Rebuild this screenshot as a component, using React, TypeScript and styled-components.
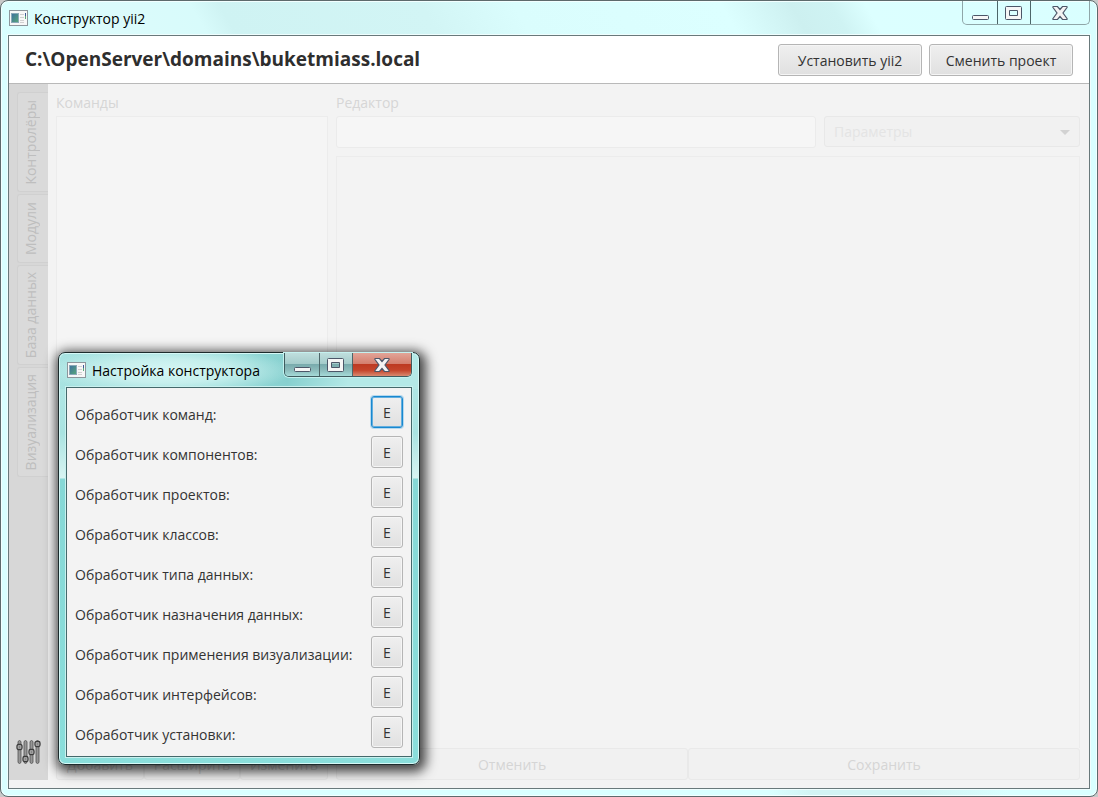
import React from "react";
import styled, { createGlobalStyle, css } from "styled-components";

const Global = createGlobalStyle`
  *, *::before, *::after { box-sizing: border-box; }
  body { margin: 0; background: #c9c9c9; font-family: "Open Sans", "Noto Sans", sans-serif; font-size: 14px; color: #333; }
  button, input, select { font: inherit; color: inherit; margin: 0; }
`;

const Window = styled.div`
  position: relative;
  display: flex;
  flex-direction: column;
  min-height: 100vh;
  padding: 0 7px 7px;
  border: 1px solid #5d6a6c;
  border-radius: 8px;
  box-shadow: inset 0 0 0 1px #f2ffff;
  background:
    linear-gradient(60deg, #d9ffff 0, #dcfbfb 90px, #d8fbfb 180px, #cff3f3 205px, #d2f5f5 380px, #dafdfd 460px, #dcffff 640px, #cdf0f0 700px, #cff3f3 735px, #dcffff 765px, #d9ffff 100%) 0 0 / 100% 36px no-repeat,
    linear-gradient(to right, #d9ffff 0, #d9ffff 70%, #d2f4f4 74%, #d2f4f4 84%, #d9ffff 92%) 0 100% / 100% 8px no-repeat,
    #d9ffff;
`;

const TitleBar = styled.header`
  display: flex;
  align-items: flex-start;
  height: 34px;
  flex: none;
`;

const Caption = styled.h1`
  display: flex;
  flex: 1;
  align-items: center;
  gap: 6px;
  height: 34px;
  margin: 0;
  padding-left: 1px;
  font-size: 14px;
  font-weight: 400;
  color: #000;
  white-space: nowrap;
`;

const Controls = styled.div<{ $active?: boolean }>`
  display: flex;
  height: 24px;
  border: 1px solid ${(p) => (p.$active ? "#3f5b5e" : "#8fa6a8")};
  border-top: 0;
  border-radius: 0 0 5px 5px;
  overflow: hidden;
  ${(p) => p.$active && css`box-shadow: 0 0 0 1px #c4f1ef;`}
`;

const ControlButton = styled.button<{ $width: number; $tone?: "glass" | "red" }>`
  display: grid;
  place-items: center;
  width: ${(p) => p.$width}px;
  padding: 0;
  border: 0;
  background: ${(p) =>
    p.$tone === "red"
      ? "linear-gradient(#e2a598 0, #d4806f 46%, #bd3a22 50%, #c5452b 75%, #d98a70 100%)"
      : p.$tone === "glass"
      ? "linear-gradient(#bfdedd 0, #a5cccb 46%, #79abad 50%, #8cbcbc 75%, #a5dad8 100%)"
      : "transparent"};
  & + & { border-left: 1px solid ${(p) => (p.$tone ? "#4d6669" : "#9cb4b6")}; }
`;

const Client = styled.main`
  display: flex;
  flex: 1;
  flex-direction: column;
  border: 1px solid #69797b;
  outline: 1px solid #effefe;
  background: #f3f3f3;
`;

const ProjectBar = styled.div`
  display: flex;
  align-items: center;
  gap: 7px;
  height: 48px;
  padding: 1px 16px 0;
  border-bottom: 1px solid #b9b9b9;
  background: #fff;
`;

const ProjectPath = styled.h2`
  flex: 1;
  margin: 0;
  padding-bottom: 2px;
  font-size: 19px;
  line-height: 24px;
  font-weight: 700;
  color: #2e2e2e;
`;

const raised = css`
  border: 1px solid #b5b5b5;
  border-radius: 3px;
  background: linear-gradient(#efefef, #e0e0e0);
  box-shadow: inset 0 0 0 1px #f5f5f5;
`;

const ProjectButton = styled.button`
  ${raised}
  width: 144px;
  height: 32px;
  padding: 0;
`;

const Workspace = styled.div`
  display: flex;
  flex: 1;
  gap: 8px;
  padding: 0 9px 8px 0;
`;

const Sidebar = styled.nav`
  display: flex;
  flex-direction: column;
  align-items: flex-end;
  gap: 2px;
  width: 39px;
  padding: 8px 0 13px;
  background: #d7d7d7;
`;

const SideTab = styled.button<{ $length: number }>`
  width: 31px;
  height: ${(p) => p.$length}px;
  padding: 0 2px 0 0;
  border: 1px solid #d0d0d0;
  border-right: 0;
  border-radius: 3px 0 0 3px;
  background: #dadada;
  color: #bebebe;
  writing-mode: vertical-rl;
  & > span { display: inline-block; padding-left: 4px; transform: rotate(180deg); }
`;

const SettingsButton = styled.button`
  width: 26px;
  height: 28px;
  margin: auto auto 0 7px;
  padding: 0;
  border: 0;
  background: none;
`;

const Column = styled.section<{ $fixed?: boolean }>`
  display: flex;
  flex-direction: column;
  flex: ${(p) => (p.$fixed ? "0 0 272px" : "1")};
  min-width: 0;
`;

const FieldLabel = styled.label`
  height: 32px;
  padding-top: 8px;
  line-height: 22px;
  color: #d6d6d6;
`;

const CommandList = styled.div`
  flex: 1;
  border: 1px solid #ececec;
  background: #f5f5f5;
`;

const EditorTools = styled.div`
  display: flex;
  gap: 8px;
  margin-bottom: 8px;
`;

const CommandInput = styled.input`
  flex: 1;
  min-width: 0;
  height: 32px;
  border: 1px solid #ebebeb;
  border-radius: 3px;
  background: #f6f6f6;
`;

const SelectBox = styled.div`
  display: grid;
  align-items: center;
  width: 256px;
  & > * { grid-area: 1 / 1; }
  & > svg { justify-self: end; margin-right: 10px; pointer-events: none; }
`;

const ParameterSelect = styled.select`
  appearance: none;
  width: 100%;
  height: 31px;
  align-self: start;
  padding: 0 9px;
  border: 1px solid #e8e8e8;
  border-radius: 3px;
  background: #f1f1f1;
  color: #e4e4e4;
  opacity: 1;
`;

const EditorArea = styled.textarea`
  flex: 1;
  width: 100%;
  resize: none;
  border: 1px solid #ececec;
  border-bottom: 0;
  background: #f3f3f3;
`;

const ButtonGroup = styled.div`
  display: flex;
  height: 32px;
`;

const GhostButton = styled.button<{ $grow: number }>`
  flex: ${(p) => p.$grow} 1 0;
  min-width: 0;
  padding: 0;
  border: 1px solid #e9e9e9;
  border-radius: 3px;
  background: #f1f1f1;
  color: #d5d5d5;
`;

const Dialog = styled.section`
  position: absolute;
  left: 57px;
  top: 351px;
  width: 362px;
  padding: 0 7px 7px;
  border: 1px solid #1d2b2c;
  border-radius: 7px;
  background:
    radial-gradient(ellipse 125px 24px at 110px 18px, #d6f7f5 0, #d0f3f1cc 50%, #d3f5f300 100%) 0 0 / 100% 36px no-repeat,
    linear-gradient(100deg, #a9e3e1 0, #97dcda 160px, #87d0cf 230px, #b4e9e7 290px) 0 0 / 100% 36px no-repeat,
    linear-gradient(#b4e9e7 0, #a9e3e1 80px, #d8f4f2 125px, #86d8d6 126px, #8adedb 100%);
  box-shadow: inset 0 0 0 1px #d5f8f6, 2px 3px 12px 4px rgba(0, 0, 0, 0.72);
`;

const HandlerList = styled.div`
  display: flex;
  flex-direction: column;
  gap: 8px;
  padding: 8px;
  border: 1px solid #44696b;
  outline: 1px solid #c9f1ef;
  background: #f3f3f3;
`;

const HandlerRow = styled.div`
  display: flex;
  align-items: center;
  justify-content: space-between;
  height: 32px;
  & > label { padding-top: 4px; white-space: nowrap; }
`;

const HandlerButton = styled.button<{ $focused?: boolean }>`
  ${raised}
  width: 32px;
  height: 32px;
  padding: 0;
  ${(p) => p.$focused && css`
    border-color: #1888d0;
    box-shadow: inset 0 0 0 1px #62aede, 0 0 0 1px #b5d8ee;
  `}
`;

const AppIcon = () => (
  <svg width="19" height="16" viewBox="0 0 19 16" aria-hidden="true">
    <defs>
      <linearGradient id="screen" x1="0" y1="0" x2="1" y2="1">
        <stop offset="0" stopColor="#3d6fa0" />
        <stop offset="1" stopColor="#58a878" />
      </linearGradient>
    </defs>
    <rect x="0.5" y="0.5" width="18" height="15" fill="#f7f7f7" stroke="#8d969c" />
    <rect x="2.500" y="3.500" width="7" height="9" fill="url(#screen)" stroke="#8aa9b8" />
    <path d="M11 4.500h4M11 7.500h4M11 10.500h4M11 12.500h4" stroke="#d0d0d0" />
    <path d="M16.500 3v3" stroke="#3d5c98" />
    <path d="M16.500 6v3" stroke="#58a878" />
  </svg>
);

const MinimizeIcon = () => (
  <svg width="18" height="22" viewBox="0 0 18 22" aria-hidden="true">
    <rect x="1.500" y="13.500" width="16" height="4" rx="1" fill="#f6f6f6" stroke="#4c5668" />
  </svg>
);

const MaximizeIcon = () => (
  <svg width="18" height="22" viewBox="0 0 18 22" aria-hidden="true">
    <path fillRule="evenodd" d="M1.500 4.500h14q1 0 1 1v11q0 1-1 1h-14q-1 0-1-1v-11q0-1 1-1zM4.500 8.500v5h8v-5z" fill="#f6f6f6" stroke="#4c5668" />
  </svg>
);

const CloseIcon = () => (
  <svg width="18" height="22" viewBox="0 0 18 22" aria-hidden="true">
    <path d="M2.500 4.500h4l2.500 3 2.500-3h4q1 0 .5 1l-4 5.500 4 5.500q.5 1-.5 1h-4l-2.500-3-2.500 3h-4q-1 0-.5-1l4-5.500-4-5.500q-.5-1 .5-1z" fill="#f3f3f3" stroke="#4c5668" strokeWidth="1.200" />
  </svg>
);

const SlidersIcon = () => (
  <svg width="26" height="26" viewBox="0 0 26 26" fill="#969696" stroke="#505050" aria-hidden="true">
    <path strokeWidth="0.800" d="M2 2.500q1.500-2 3 0v21q-1.500 2-3 0zM8 2.500q1.500-2 3 0v21q-1.500 2-3 0zM14 2.500q1.500-2 3 0v21q-1.500 2-3 0zM20 2.500q1.500-2 3 0v21q-1.500 2-3 0z" />
    <g fill="#bdbdbd" stroke="#3c3c3c" strokeWidth="1.300">
      <rect x="1" y="5.500" width="5" height="5" rx="1.500" />
      <rect x="7" y="17.500" width="5" height="5" rx="1.500" />
      <rect x="13" y="10.500" width="5" height="5" rx="1.500" />
      <rect x="19" y="2.500" width="5" height="5" rx="1.500" />
    </g>
    <path d="M2.500 8h2M8.500 20h2M14.500 13h2M20.500 5h2" />
  </svg>
);

const WindowControls = ({ active }: { active?: boolean }) => (
  <Controls $active={active}>
    <ControlButton $width={34} $tone={active ? "glass" : undefined} aria-label="Свернуть"><MinimizeIcon /></ControlButton>
    <ControlButton $width={33} $tone={active ? "glass" : undefined} aria-label="Развернуть"><MaximizeIcon /></ControlButton>
    <ControlButton $width={59} $tone={active ? "red" : undefined} aria-label="Закрыть"><CloseIcon /></ControlButton>
  </Controls>
);

const tabs = [
  { title: "Контролёры", length: 100 },
  { title: "Модули", length: 69 },
  { title: "База данных", length: 100 },
  { title: "Визуализация", length: 110 },
];

const handlers = [
  "Обработчик команд:",
  "Обработчик компонентов:",
  "Обработчик проектов:",
  "Обработчик классов:",
  "Обработчик типа данных:",
  "Обработчик назначения данных:",
  "Обработчик применения визуализации:",
  "Обработчик интерфейсов:",
  "Обработчик установки:",
];

export default function App() {
  return (
    <>
      <Global />
      <Window>
        <TitleBar>
          <Caption><AppIcon />Конструктор yii2</Caption>
          <WindowControls />
        </TitleBar>
        <Client>
          <ProjectBar>
            <ProjectPath>C:\OpenServer\domains\buketmiass.local</ProjectPath>
            <ProjectButton>Установить yii2</ProjectButton>
            <ProjectButton>Сменить проект</ProjectButton>
          </ProjectBar>
          <Workspace>
            <Sidebar>
              {tabs.map((t) => (
                <SideTab key={t.title} $length={t.length} disabled><span>{t.title}</span></SideTab>
              ))}
              <SettingsButton aria-label="Настройка конструктора"><SlidersIcon /></SettingsButton>
            </Sidebar>
            <Column $fixed>
              <FieldLabel as="div">Команды</FieldLabel>
              <CommandList />
              <ButtonGroup>
                <GhostButton $grow={88} disabled>Добавить</GhostButton>
                <GhostButton $grow={96} disabled>Расширить</GhostButton>
                <GhostButton $grow={88} disabled>Изменить</GhostButton>
              </ButtonGroup>
            </Column>
            <Column>
              <FieldLabel htmlFor="command">Редактор</FieldLabel>
              <EditorTools>
                <CommandInput id="command" disabled />
                <SelectBox>
                  <ParameterSelect aria-label="Параметры" disabled><option>Параметры</option></ParameterSelect>
                  <svg width="10" height="5" viewBox="0 0 10 5" aria-hidden="true"><path d="M0 0h10L5 5z" fill="#d2d2d2" /></svg>
                </SelectBox>
              </EditorTools>
              <EditorArea aria-label="Код" disabled />
              <ButtonGroup>
                <GhostButton $grow={352} disabled>Отменить</GhostButton>
                <GhostButton $grow={392} disabled>Сохранить</GhostButton>
              </ButtonGroup>
            </Column>
          </Workspace>
        </Client>
        <Dialog role="dialog" aria-label="Настройка конструктора">
          <TitleBar>
            <Caption as="h2"><AppIcon />Настройка конструктора</Caption>
            <WindowControls active />
          </TitleBar>
          <HandlerList>
            {handlers.map((name, i) => (
              <HandlerRow key={name}>
                <label htmlFor={`handler-${i}`}>{name}</label>
                <HandlerButton id={`handler-${i}`} $focused={i === 0}>E</HandlerButton>
              </HandlerRow>
            ))}
          </HandlerList>
        </Dialog>
      </Window>
    </>
  );
}
